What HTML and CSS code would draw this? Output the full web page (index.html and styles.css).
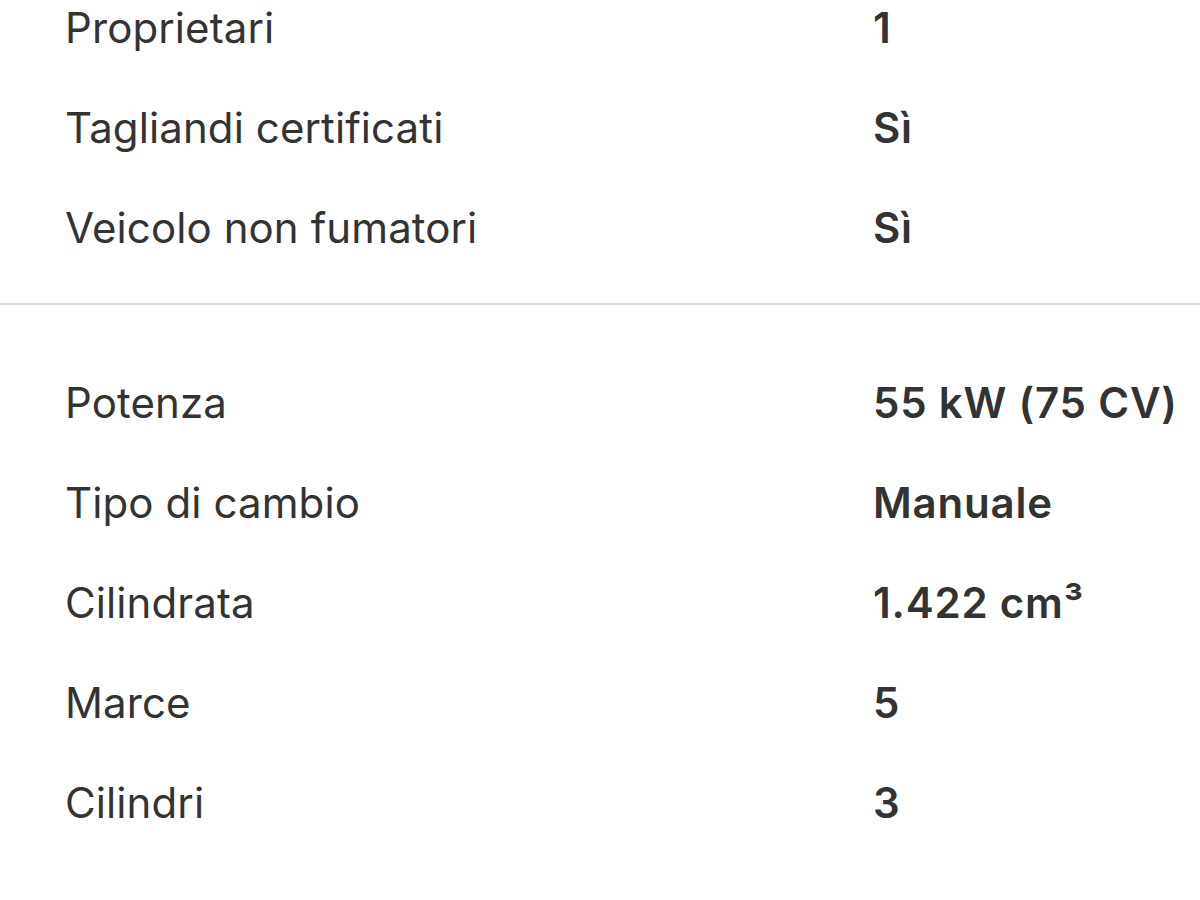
FILE: index.html
```html
<!DOCTYPE html>
<html lang="it">
<head>
<meta charset="utf-8">
<link rel="stylesheet" href="styles.css">
</head>
<body>
<div class="specs">
  <section class="group group-first">
    <div class="row"><span class="label">Proprietari</span><span class="value">1</span></div>
    <div class="row"><span class="label">Tagliandi certificati</span><span class="value">Sì</span></div>
    <div class="row"><span class="label">Veicolo non fumatori</span><span class="value">Sì</span></div>
  </section>
  <section class="group group-second">
    <div class="row"><span class="label">Potenza</span><span class="value">55 kW (75 CV)</span></div>
    <div class="row"><span class="label">Tipo di cambio</span><span class="value">Manuale</span></div>
    <div class="row"><span class="label">Cilindrata</span><span class="value">1.422 cm³</span></div>
    <div class="row"><span class="label">Marce</span><span class="value">5</span></div>
    <div class="row"><span class="label">Cilindri</span><span class="value">3</span></div>
  </section>
</div>
</body>
</html>
```
FILE: styles.css
```css
html, body {
  margin: 0;
  padding: 0;
  background: #ffffff;
  overflow: hidden;
}
body {
  width: 1200px;
  height: 900px;
  font-family: Inter, "Noto Sans", "Liberation Sans", sans-serif;
  color: #333333;
}
.specs {
  margin-top: -22px;
}
.group {
  display: flex;
  flex-direction: column;
}
.group-first {
  padding-bottom: 25px;
  border-bottom: 2px solid #dddddd;
}
.group-second {
  padding-top: 48px;
}
.row {
  display: grid;
  grid-template-columns: 808px 1fr;
  padding-left: 65px;
  height: 100px;
  line-height: 100px;
  font-size: 42px;
  white-space: nowrap;
}
.label {
  font-weight: 400;
  letter-spacing: 0.1px;
}
.value {
  font-weight: 600;
  letter-spacing: 0.8px;
}
```
